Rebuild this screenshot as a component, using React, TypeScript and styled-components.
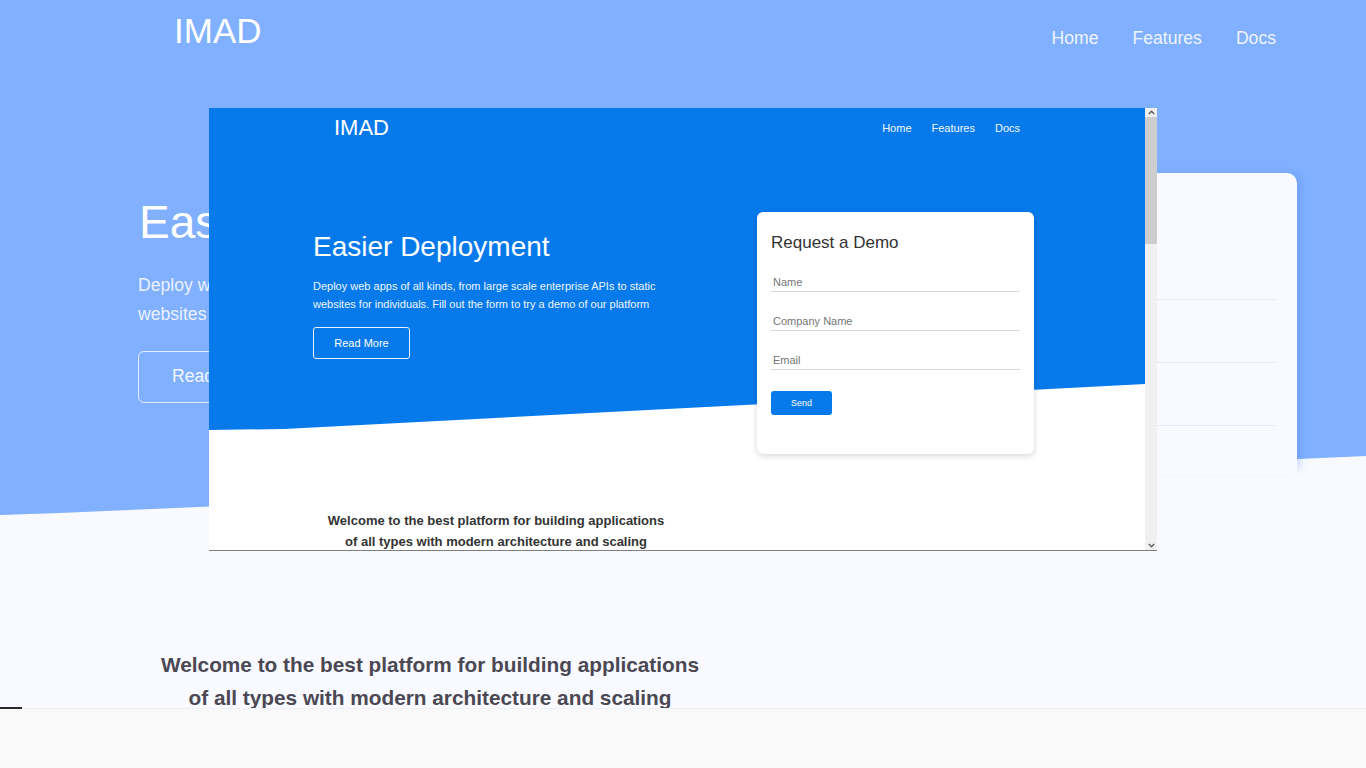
import React from "react";
import styled, { createGlobalStyle } from "styled-components";

const GlobalStyle = createGlobalStyle`
  html, body { margin: 0; padding: 0; }
  body {
    font-family: "Liberation Sans", Arial, Helvetica, sans-serif;
    background: #f8faff;
  }
  * { box-sizing: border-box; }
`;

const Stage = styled.div`
  position: relative;
  width: 1366px;
  height: 768px;
  overflow: hidden;
  background: #f8faff;
`;

/* ---------- enlarged background page ---------- */

const BgPage = styled.div`
  display: flex;
  flex-direction: column;
  height: 100%;
`;

const BgHero = styled.header`
  position: relative;
  height: 515px;
  flex-shrink: 0;
  &::before {
    content: "";
    position: absolute;
    inset: 0;
    background: #80b0ff;
    clip-path: polygon(0 0, 100% 0, 100% 456px, 60px 513px, 0 515px);
  }
  & > * {
    position: relative;
  }
`;

const BgNav = styled.nav`
  display: flex;
  align-items: flex-start;
  justify-content: space-between;
  padding: 11px 90px 0 174px;
`;

const BgLogo = styled.div`
  font-size: 35px;
  color: #ffffff;
`;

const BgLinks = styled.div`
  display: flex;
  gap: 34px;
  margin-top: 17px;
`;

const BgLink = styled.span`
  font-size: 17.6px;
  color: #eef4ff;
`;

const BgHeroBody = styled.div`
  display: flex;
  justify-content: space-between;
  align-items: flex-start;
  padding: 0 69px 0 138px;
`;

const BgIntro = styled.div`
  margin-top: 144px;
  width: 600px;
`;

const BgTitle = styled.h1`
  margin: 0;
  font-size: 46px;
  font-weight: 400;
  color: #ffffff;
  padding-left: 1px;
`;

const BgText = styled.p`
  margin: 22px 0 0;
  font-size: 17.6px;
  line-height: 28.8px;
  color: #eaf2ff;
  width: 580px;
`;

const BgButton = styled.button`
  margin-top: 22px;
  width: 155px;
  height: 52px;
  border: 1px solid #e4eeff;
  border-radius: 6px;
  background: transparent;
  color: #f2f7ff;
  font-family: inherit;
  font-size: 17.6px;
`;

const BgCard = styled.div`
  margin-top: 122px;
  width: 443px;
  height: 302px;
  background: #f8faff;
  border-radius: 10px 10px 0 0;
  box-shadow: 7px -2px 8px -4px rgba(40, 100, 230, 0.22);
  padding: 34px 22px 0;
  display: flex;
  flex-direction: column;
`;

const BgCardTitle = styled.div`
  font-size: 27px;
  line-height: 32px;
  color: #444;
`;

const BgField = styled.div<{ $first?: boolean }>`
  margin-top: ${(p) => (p.$first ? 31 : 33)}px;
  height: 30px;
  flex-shrink: 0;
  border-bottom: 1px solid #e1e7f6;
  font-size: 17.6px;
  color: #8a8f9a;
`;

const BgWelcome = styled.section`
  height: 193px;
  flex-shrink: 0;
  padding: 133px 0 0 140px;
`;

const BgWelcomeText = styled.p`
  margin: 0;
  width: 580px;
  text-align: center;
  font-size: 20.8px;
  line-height: 33px;
  font-weight: 700;
  color: #4b4854;
`;

const BgFooter = styled.footer`
  position: relative;
  flex: 1;
  background: #f9f9fa;
  border-top: 1px solid #eef0fa;
  &::before {
    content: "";
    position: absolute;
    left: 0;
    top: -2px;
    width: 22px;
    height: 2px;
    background: #2a2a2e;
  }
`;

/* ---------- embedded preview window ---------- */

const PreviewWindow = styled.section`
  position: absolute;
  left: 209px;
  top: 108px;
  width: 948px;
  height: 443px;
  display: flex;
  background: #ffffff;
  border-bottom: 1px solid #7f7f7f;
`;

const Viewport = styled.div`
  flex: 1;
  overflow: hidden;
  display: flex;
  flex-direction: column;
  background: #ffffff;
`;

const Scrollbar = styled.div`
  width: 12px;
  background: #f0f0f0;
  display: flex;
  flex-direction: column;
`;

const ScrollArrow = styled.div`
  height: 9px;
  display: flex;
  align-items: center;
  justify-content: center;
`;

const ScrollThumb = styled.div`
  height: 127px;
  background: #cdcdcd;
`;

const ScrollTrack = styled.div`
  flex: 1;
`;

const Hero = styled.div`
  position: relative;
  height: 322px;
  flex-shrink: 0;
  &::before {
    content: "";
    position: absolute;
    inset: 0;
    background: #077aeb;
    clip-path: polygon(0 0, 100% 0, 100% 276px, 75px 321px, 0 322px);
  }
  & > * {
    position: relative;
  }
`;

const Nav = styled.nav`
  height: 40px;
  display: flex;
  align-items: center;
  justify-content: space-between;
  padding: 0 125px;
`;

const Logo = styled.div`
  font-size: 22px;
  color: #ffffff;
`;

const NavLinks = styled.div`
  display: flex;
  gap: 20px;
`;

const NavLink = styled.span`
  font-size: 11px;
  color: #f2f7ff;
`;

const HeroBody = styled.div`
  display: flex;
  justify-content: space-between;
  align-items: flex-start;
  padding: 0 111px 0 104px;
`;

const Intro = styled.div`
  margin-top: 83px;
  width: 380px;
`;

const Title = styled.h1`
  margin: 0;
  font-size: 28px;
  font-weight: 400;
  color: #ffffff;
`;

const Lead = styled.p`
  margin: 14px 0 0;
  width: 360px;
  font-size: 11px;
  line-height: 18px;
  color: #eef5ff;
`;

const OutlineButton = styled.button`
  margin-top: 14px;
  width: 97px;
  height: 32px;
  border: 1px solid #e8f1ff;
  border-radius: 3px;
  background: transparent;
  color: #ffffff;
  font-family: inherit;
  font-size: 11px;
  padding: 0;
`;

const Card = styled.form`
  margin-top: 64px;
  width: 277px;
  height: 242px;
  background: #ffffff;
  border-radius: 6px;
  box-shadow: 0 2px 6px rgba(0, 0, 0, 0.16);
  padding: 21px 14px 0;
  display: flex;
  flex-direction: column;
`;

const CardTitle = styled.div`
  font-size: 17px;
  line-height: 20px;
  color: #333333;
`;

const Field = styled.input`
  margin-top: 20px;
  height: 19px;
  width: 100%;
  border: none;
  border-bottom: 1px solid #d6d8e0;
  padding: 0 2px;
  font-family: inherit;
  font-size: 11px;
  color: #333;
  background: transparent;
  outline: none;
  &::placeholder {
    color: #767676;
  }
`;

const SendButton = styled.button`
  margin-top: 21px;
  width: 61px;
  height: 24px;
  border: none;
  border-radius: 3px;
  background: #077aeb;
  color: #ffffff;
  font-family: inherit;
  font-size: 9px;
  padding: 0;
`;

const Welcome = styled.section`
  padding: 80px 0 0 104px;
`;

const WelcomeText = styled.p`
  margin: 0;
  width: 366px;
  text-align: center;
  font-size: 13px;
  line-height: 21px;
  font-weight: 700;
  color: #333333;
`;

const Chevron = ({ up }: { up?: boolean }) => (
  <svg width="7" height="5" viewBox="0 0 7 5">
    <polyline
      points={up ? "0.8,4 3.5,1.2 6.2,4" : "0.8,1 3.5,3.8 6.2,1"}
      fill="none"
      stroke="#5f5f5f"
      strokeWidth="1.4"
    />
  </svg>
);

const welcomeLines = (
  <>
    Welcome to the best platform for building applications
    <br />
    of all types with modern architecture and scaling
  </>
);

export default function App() {
  return (
    <>
      <GlobalStyle />
      <Stage>
        <BgPage>
          <BgHero>
            <BgNav>
              <BgLogo>IMAD</BgLogo>
              <BgLinks>
                <BgLink>Home</BgLink>
                <BgLink>Features</BgLink>
                <BgLink>Docs</BgLink>
              </BgLinks>
            </BgNav>
            <BgHeroBody>
              <BgIntro>
                <BgTitle>Easier Deployment</BgTitle>
                <BgText>
                  Deploy web apps of all kinds, from large scale enterprise APIs to static
                  websites for individuals. Fill out the form to try a demo of our platform
                </BgText>
                <BgButton>Read More</BgButton>
              </BgIntro>
              <BgCard>
                <BgCardTitle>Request a Demo</BgCardTitle>
                <BgField $first>Name</BgField>
                <BgField>Company Name</BgField>
                <BgField>Email</BgField>
              </BgCard>
            </BgHeroBody>
          </BgHero>
          <BgWelcome>
            <BgWelcomeText>{welcomeLines}</BgWelcomeText>
          </BgWelcome>
          <BgFooter />
        </BgPage>

        <PreviewWindow>
          <Viewport>
            <Hero>
              <Nav>
                <Logo>IMAD</Logo>
                <NavLinks>
                  <NavLink>Home</NavLink>
                  <NavLink>Features</NavLink>
                  <NavLink>Docs</NavLink>
                </NavLinks>
              </Nav>
              <HeroBody>
                <Intro>
                  <Title>Easier Deployment</Title>
                  <Lead>
                    Deploy web apps of all kinds, from large scale enterprise APIs to static
                    websites for individuals. Fill out the form to try a demo of our platform
                  </Lead>
                  <OutlineButton type="button">Read More</OutlineButton>
                </Intro>
                <Card onSubmit={(e) => e.preventDefault()}>
                  <CardTitle>Request a Demo</CardTitle>
                  <Field placeholder="Name" />
                  <Field placeholder="Company Name" />
                  <Field placeholder="Email" />
                  <SendButton type="submit">Send</SendButton>
                </Card>
              </HeroBody>
            </Hero>
            <Welcome>
              <WelcomeText>{welcomeLines}</WelcomeText>
            </Welcome>
          </Viewport>
          <Scrollbar>
            <ScrollArrow>
              <Chevron up />
            </ScrollArrow>
            <ScrollThumb />
            <ScrollTrack />
            <ScrollArrow>
              <Chevron />
            </ScrollArrow>
          </Scrollbar>
        </PreviewWindow>
      </Stage>
    </>
  );
}
